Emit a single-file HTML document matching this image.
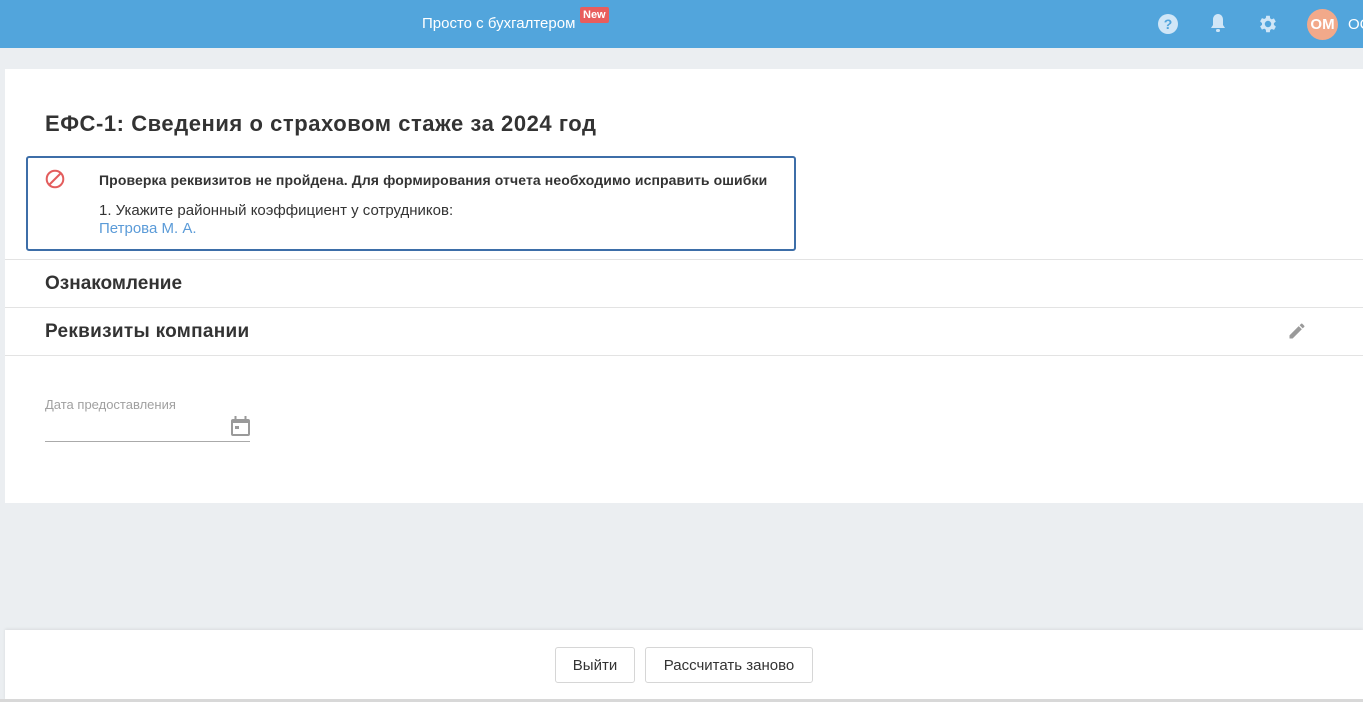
<!DOCTYPE html>
<html><head><meta charset="utf-8"><style>
*{box-sizing:border-box;margin:0;padding:0}
body{width:1363px;height:702px;overflow:hidden;background:#ebeef1;font-family:"Liberation Sans",Arial,sans-serif;color:#333;position:relative}
.top{position:absolute;left:0;top:0;width:1363px;height:48px;background:#52a5dc}
.card{position:absolute;left:5px;top:69px;width:1358px;height:434px;background:#fff}
.abs{position:absolute;white-space:nowrap}
.line{position:absolute;left:5px;width:1358px;height:1px;background:#e3e3e3}
.btn{position:absolute;top:647px;height:36px;border:1px solid #d6d6d6;border-radius:3px;background:#fff;font-size:15px;line-height:35px;text-align:center;color:#333}
</style></head><body>
<div class="top">
<div class="abs" style="left:422px;top:15px;color:#fff;font-size:15px">Просто с бухгалтером</div>
<div class="abs" style="left:580px;top:7px;background:#e85d5d;color:#fff;font-size:11px;font-weight:bold;padding:1px 3px;border-radius:2px;line-height:14px">New</div>
<svg class="abs" style="left:1157px;top:13px" width="22" height="22" viewBox="0 0 22 22"><circle cx="11" cy="11" r="10" fill="#d0e6f7"/><text x="11" y="16" text-anchor="middle" font-size="14" font-weight="bold" fill="#52a5dc" font-family="Liberation Sans">?</text></svg>
<svg class="abs" style="left:1208px;top:12px" width="20" height="22" viewBox="0 0 20 22"><path d="M10 2c-3 0-5 2.5-5 5.5V13l-2 3h14l-2-3V7.5C15 4.5 13 2 10 2z" fill="#d0e6f7"/><rect x="8" y="17" width="4" height="3" rx="1.5" fill="#d0e6f7"/></svg>
<svg class="abs" style="left:1257px;top:13px" width="22" height="22" viewBox="0 0 24 24"><path fill="#d0e6f7" d="M19.4 13a7.5 7.5 0 000-2l2.1-1.6-2-3.5-2.5 1a7.3 7.3 0 00-1.7-1L15 3h-4l-.4 2.6a7.3 7.3 0 00-1.7 1l-2.5-1-2 3.5L6.5 11a7.5 7.5 0 000 2l-2.1 1.6 2 3.5 2.5-1c.5.4 1.1.8 1.7 1L11 21h4l.4-2.6c.6-.3 1.2-.6 1.7-1l2.5 1 2-3.5zM13 15.5a3.5 3.5 0 110-7 3.5 3.5 0 010 7z" transform="translate(-1 0)"/></svg>
<div class="abs" style="left:1307px;top:9px;width:31px;height:31px;border-radius:50%;background:#f2a98a;color:#fff;font-weight:bold;font-size:15px;line-height:31px;text-align:center">ОМ</div>
<div class="abs" style="left:1348px;top:16px;color:#fff;font-size:15px">ОС</div>
</div>
<div class="card"></div>
<div class="abs" style="left:45px;top:111px;font-size:22px;font-weight:bold;color:#333;letter-spacing:0.55px">ЕФС-1: Сведения о страховом стаже за 2024 год</div>
<div class="abs" style="left:26px;top:156px;width:770px;height:95px;border:2px solid #3d6ea8;border-radius:3px"></div>
<svg class="abs" style="left:45px;top:169px" width="20" height="20" viewBox="0 0 20 20"><circle cx="10" cy="10" r="8.3" fill="none" stroke="#e35d5d" stroke-width="2"/><line x1="4.5" y1="15.5" x2="15.5" y2="4.5" stroke="#e35d5d" stroke-width="2"/></svg>
<div class="abs" style="left:99px;top:172px;font-size:14px;font-weight:bold;color:#333;letter-spacing:0.1px">Проверка реквизитов не пройдена. Для формирования отчета необходимо исправить ошибки</div>
<div class="abs" style="left:99px;top:202px;font-size:15px;color:#333">1. Укажите районный коэффициент у сотрудников:</div>
<div class="abs" style="left:99px;top:220px;font-size:15px;color:#5b9bd8">Петрова М. А.</div>
<div class="line" style="top:259px"></div>
<div class="abs" style="left:45px;top:273px;font-size:19px;font-weight:bold;color:#333">Ознакомление</div>
<div class="line" style="top:307px"></div>
<div class="abs" style="left:45px;top:321px;font-size:19px;font-weight:bold;color:#333;letter-spacing:0.3px">Реквизиты компании</div>
<svg class="abs" style="left:1287px;top:321px" width="20" height="20" viewBox="0 0 24 24"><path fill="#9a9a9a" d="M3 17.25V21h3.75L17.8 9.94l-3.75-3.75L3 17.25zM20.7 7.04a1 1 0 000-1.41l-2.34-2.34a1 1 0 00-1.41 0l-1.83 1.83 3.75 3.75 1.83-1.83z"/></svg>
<div class="line" style="top:355px"></div>
<div class="abs" style="left:45px;top:397px;font-size:13px;color:#a0a0a0">Дата предоставления</div>
<svg class="abs" style="left:231px;top:416px" width="19" height="20" viewBox="0 0 19 20"><rect x="0" y="3" width="19" height="17" rx="2" fill="#9a9a9a"/><rect x="2" y="7" width="15" height="11" fill="#fff"/><rect x="3.5" y="0" width="2" height="4" fill="#9a9a9a"/><rect x="13.5" y="0" width="2" height="4" fill="#9a9a9a"/><rect x="4" y="10" width="4" height="3" fill="#9a9a9a"/></svg>
<div class="abs" style="left:45px;top:441px;width:205px;height:1px;background:#aaa"></div>
<div class="abs" style="left:5px;top:630px;width:1358px;height:70px;background:#fff;box-shadow:0 -1px 3px rgba(0,0,0,0.08)"></div>
<div class="abs" style="left:0;top:699px;width:1363px;height:3px;background:#d8d8d8"></div>
<div class="btn" style="left:555px;width:80px">Выйти</div>
<div class="btn" style="left:645px;width:168px">Рассчитать заново</div>
</body></html>
